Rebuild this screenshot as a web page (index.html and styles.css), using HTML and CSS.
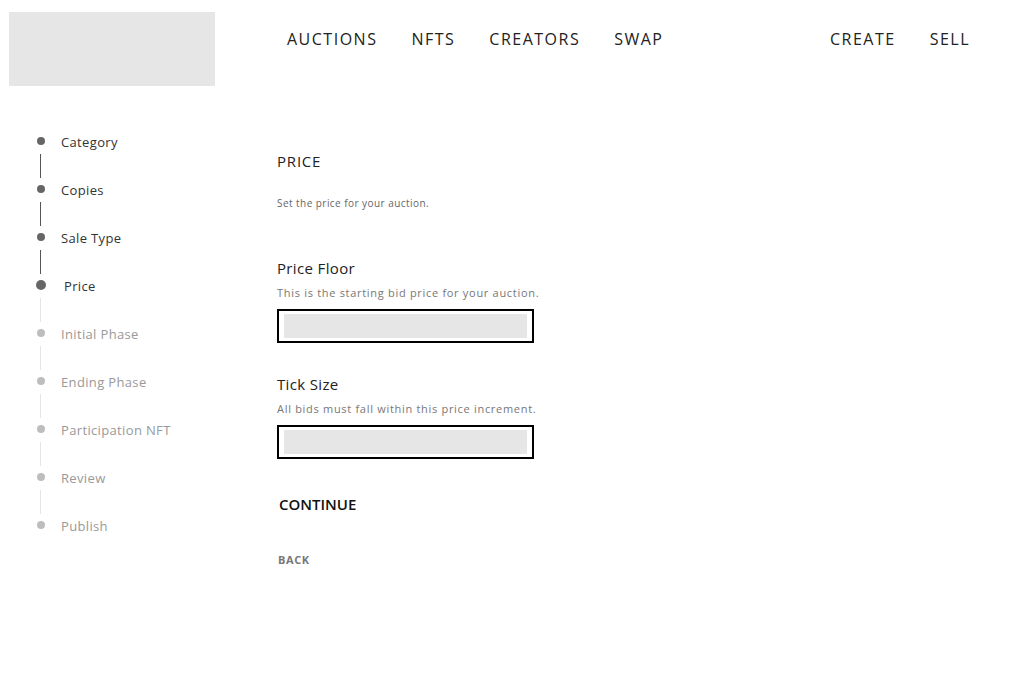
FILE: index.html
```html
<!DOCTYPE html>
<html>
<head>
<meta charset="utf-8">
<link rel="stylesheet" href="styles.css">
</head>
<body>
<header class="topbar">
  <div class="logo"></div>
  <nav class="nav-main">
    <a>AUCTIONS</a>
    <a>NFTS</a>
    <a>CREATORS</a>
    <a>SWAP</a>
  </nav>
  <nav class="nav-side">
    <a>CREATE</a>
    <a>SELL</a>
  </nav>
</header>
<div class="page">
  <aside class="steps">
    <div class="step done"><span class="dot"></span><span class="label">Category</span></div>
    <div class="line done"></div>
    <div class="step done"><span class="dot"></span><span class="label">Copies</span></div>
    <div class="line done"></div>
    <div class="step done"><span class="dot"></span><span class="label">Sale Type</span></div>
    <div class="line done"></div>
    <div class="step current"><span class="dot"></span><span class="label">Price</span></div>
    <div class="line"></div>
    <div class="step"><span class="dot"></span><span class="label">Initial Phase</span></div>
    <div class="line"></div>
    <div class="step"><span class="dot"></span><span class="label">Ending Phase</span></div>
    <div class="line"></div>
    <div class="step"><span class="dot"></span><span class="label">Participation NFT</span></div>
    <div class="line"></div>
    <div class="step"><span class="dot"></span><span class="label">Review</span></div>
    <div class="line"></div>
    <div class="step"><span class="dot"></span><span class="label">Publish</span></div>
  </aside>
  <main class="content">
    <h2 class="title">PRICE</h2>
    <p class="subtitle">Set the price for your auction.</p>
    <div class="field">
      <div class="field-label">Price Floor</div>
      <div class="field-help">This is the starting bid price for your auction.</div>
      <div class="input"><div class="input-inner"></div></div>
    </div>
    <div class="field">
      <div class="field-label">Tick Size</div>
      <div class="field-help">All bids must fall within this price increment.</div>
      <div class="input"><div class="input-inner"></div></div>
    </div>
    <div class="btn-continue">CONTINUE</div>
    <div class="btn-back">BACK</div>
  </main>
</div>
</body>
</html>
```
FILE: styles.css
```css
* { box-sizing: border-box; }
body {
  margin: 0;
  font-family: "Open Sans", "Noto Sans", sans-serif;
  color: #222;
  background: #fff;
}
.topbar {
  display: flex;
  align-items: flex-start;
  padding: 12px 0 0 9px;
  height: 86px;
}
.logo {
  width: 206px;
  height: 74px;
  background: #e6e6e6;
}
.nav-main, .nav-side {
  display: flex;
  gap: 34px;
  padding-top: 16px;
}
.nav-main { margin-left: 72px; }
.nav-side { margin-left: auto; margin-right: 66px; }
.nav-main a, .nav-side a {
  font-size: 16px;
  letter-spacing: 1.5px;
  color: #222;
  line-height: 22px;
}
.page {
  display: flex;
  padding-top: 44px;
}
.steps {
  width: 277px;
  padding-left: 36px;
  display: flex;
  flex-direction: column;
}
.step {
  display: flex;
  align-items: center;
  height: 24px;
}
.dot {
  width: 8px;
  height: 8px;
  border-radius: 50%;
  background: #bdbdbd;
  margin-left: 1px;
  margin-right: 16px;
  margin-top: -2px;
  flex: none;
}
.step.done .dot, .step.current .dot { background: #666; }
.step.current .dot {
  width: 10px;
  height: 10px;
  margin-left: 0;
  margin-right: 17px;
}
.label {
  font-size: 13px;
  letter-spacing: 0.35px;
  color: #999;
}
.step.done .label, .step.current .label { color: #333; }
.step.current .label { margin-left: 1px; }
.line {
  width: 1px;
  height: 24px;
  margin-left: 4px;
  background: #e6e6e6;
}
.line.done { background: #555; }
.content {
  padding-top: 21px;
}
.title {
  margin: 0;
  font-size: 15px;
  font-weight: 400;
  letter-spacing: 0.8px;
  line-height: 20px;
  color: #222;
}
.subtitle {
  margin: 25px 0 0;
  font-size: 10px;
  letter-spacing: 0.45px;
  line-height: 14px;
  color: #666;
}
.field { margin-top: 48px; }
.field + .field { margin-top: 31px; }
.field-label {
  font-size: 15px;
  letter-spacing: 0.35px;
  line-height: 20px;
  color: #222;
}
.field-help {
  font-size: 11px;
  letter-spacing: 0.7px;
  line-height: 16px;
  margin-top: 7px;
  color: #777;
}
.input {
  margin-top: 8px;
  width: 257px;
  height: 34px;
  border: 2px solid #000;
  padding: 3px 5px;
}
.input-inner {
  height: 100%;
  background: #e6e6e6;
}
.btn-continue {
  margin-top: 35px;
  margin-left: 2px;
  font-size: 15px;
  font-weight: 600;
  color: #111;
  line-height: 20px;
}
.btn-back {
  margin-top: 38px;
  margin-left: 1px;
  font-size: 11px;
  font-weight: 700;
  letter-spacing: 0.6px;
  color: #777;
  line-height: 16px;
}
```
